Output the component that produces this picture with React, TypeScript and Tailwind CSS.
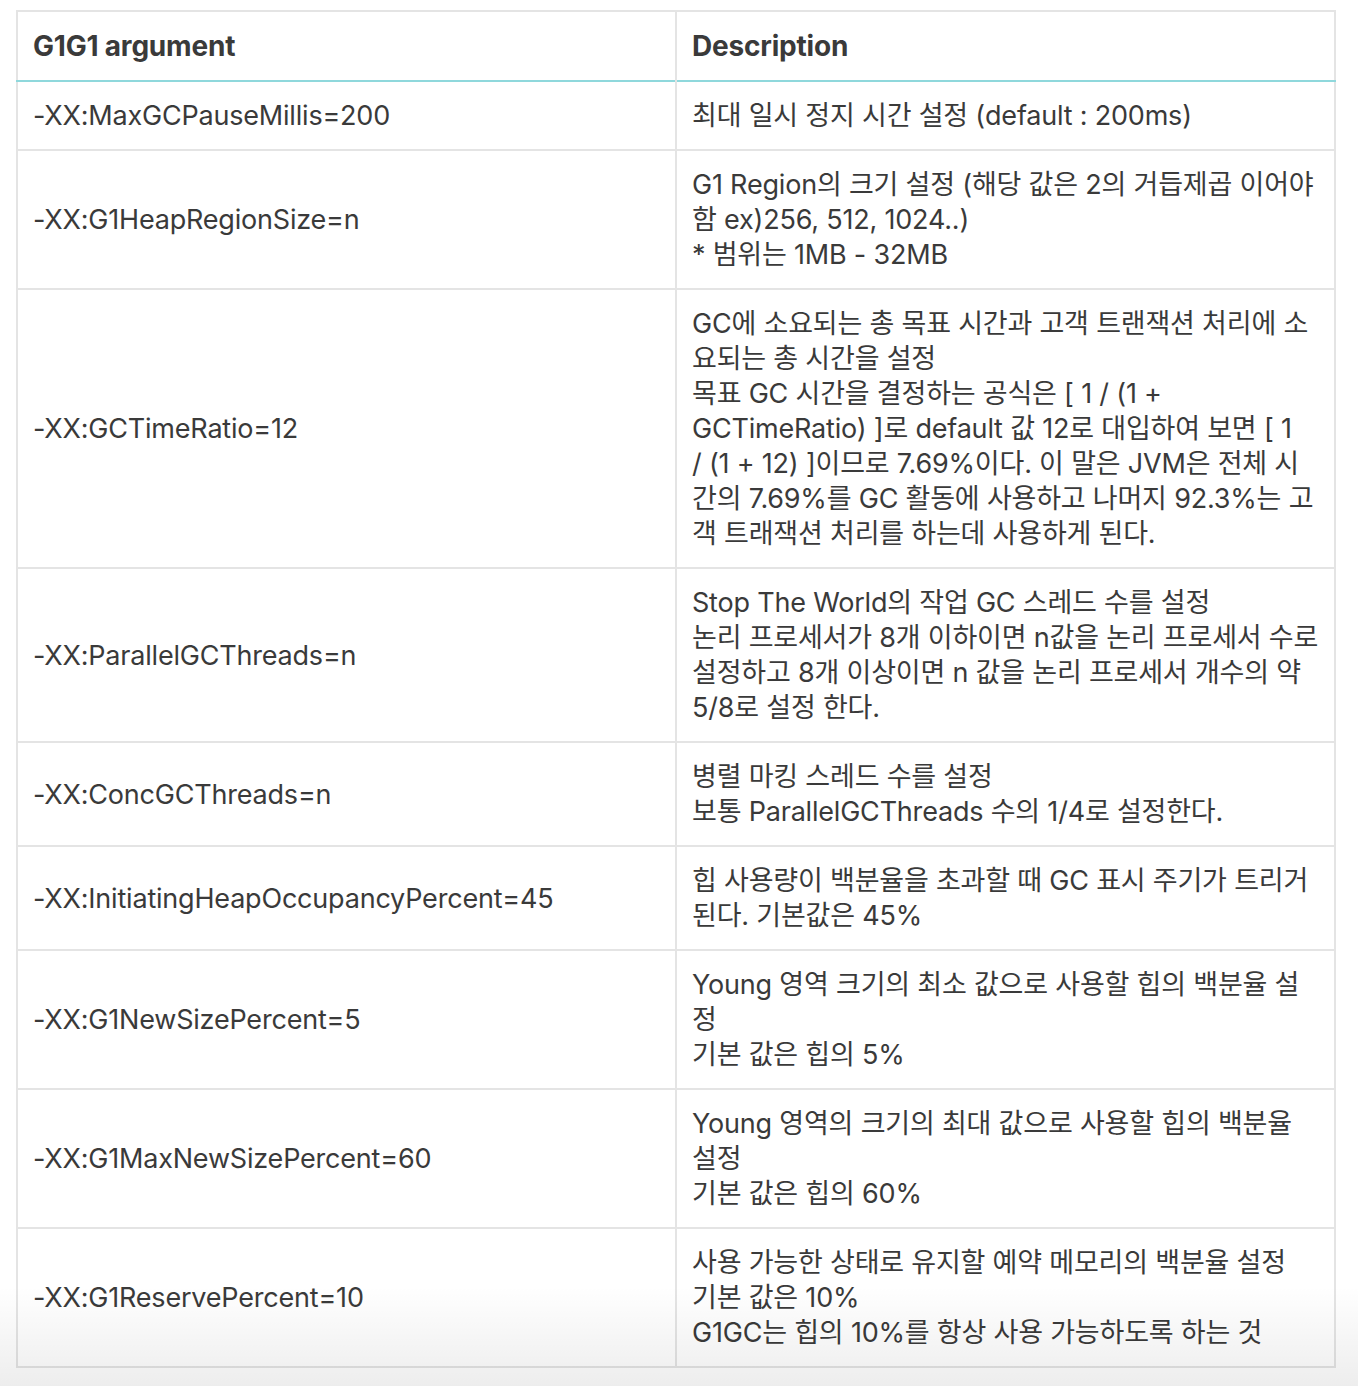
const rows: { arg: string; desc: string[] }[] = [
  { arg: '-XX:MaxGCPauseMillis=200', desc: ['최대 일시 정지 시간 설정 (default : 200ms)'] },
  {
    arg: '-XX:G1HeapRegionSize=n',
    desc: ['G1 Region의 크기 설정 (해당 값은 2의 거듭제곱 이어야', '함 ex)256, 512, 1024..)', '* 범위는 1MB - 32MB'],
  },
  {
    arg: '-XX:GCTimeRatio=12',
    desc: [
      'GC에 소요되는 총 목표 시간과 고객 트랜잭션 처리에 소',
      '요되는 총 시간을 설정',
      '목표 GC 시간을 결정하는 공식은 [ 1 / (1 +',
      'GCTimeRatio) ]로 default 값 12로 대입하여 보면 [ 1',
      '/ (1 + 12) ]이므로 7.69%이다. 이 말은 JVM은 전체 시',
      '간의 7.69%를 GC 활동에 사용하고 나머지 92.3%는 고',
      '객 트래잭션 처리를 하는데 사용하게 된다.',
    ],
  },
  {
    arg: '-XX:ParallelGCThreads=n',
    desc: [
      'Stop The World의 작업 GC 스레드 수를 설정',
      '논리 프로세서가 8개 이하이면 n값을 논리 프로세서 수로',
      '설정하고 8개 이상이면 n 값을 논리 프로세서 개수의 약',
      '5/8로 설정 한다.',
    ],
  },
  { arg: '-XX:ConcGCThreads=n', desc: ['병렬 마킹 스레드 수를 설정', '보통 ParallelGCThreads 수의 1/4로 설정한다.'] },
  {
    arg: '-XX:InitiatingHeapOccupancyPercent=45',
    desc: ['힙 사용량이 백분율을 초과할 때 GC 표시 주기가 트리거', '된다. 기본값은 45%'],
  },
  {
    arg: '-XX:G1NewSizePercent=5',
    desc: ['Young 영역 크기의 최소 값으로 사용할 힙의 백분율 설', '정', '기본 값은 힙의 5%'],
  },
  {
    arg: '-XX:G1MaxNewSizePercent=60',
    desc: ['Young 영역의 크기의 최대 값으로 사용할 힙의 백분율', '설정', '기본 값은 힙의 60%'],
  },
  {
    arg: '-XX:G1ReservePercent=10',
    desc: ['사용 가능한 상태로 유지할 예약 메모리의 백분율 설정', '기본 값은 10%', 'G1GC는 힙의 10%를 항상 사용 가능하도록 하는 것'],
  },
];

export default function App() {
  return (
    <div
      className="relative min-h-[1386px] w-[1358px] bg-white pt-[10px] pl-[16px] text-[#3a3a3a]"
      style={{ fontFamily: 'Inter, "Noto Sans CJK KR", sans-serif' }}
    >
      <table className="w-[1320px] table-fixed border-collapse border-2 border-[#e4e4e4] text-[27px] leading-[35px] tracking-[-0.2px]">
        <colgroup>
          <col className="w-[659px]" />
          <col />
        </colgroup>
        <thead>
          <tr className="h-[70px] border-b-2 border-[#8fd8dc] text-[28px]">
            <th className="border-r-2 border-[#e4e4e4] px-[15px] text-left font-bold">G1G1 argument</th>
            <th className="px-[15px] text-left font-bold">Description</th>
          </tr>
        </thead>
        <tbody>
          {rows.map((r) => (
            <tr key={r.arg} className="border-t-2 border-[#e4e4e4] first:border-t-0">
              <td className="border-r-2 border-[#e4e4e4] px-[15px] py-[16px] align-middle whitespace-nowrap">{r.arg}</td>
              <td className="px-[15px] py-[16px] align-middle">
                {r.desc.map((l, i) => (
                  <div key={i} className="whitespace-nowrap">
                    {l}
                  </div>
                ))}
              </td>
            </tr>
          ))}
        </tbody>
      </table>
      {/* soft grey fade at the bottom edge */}
      <div className="pointer-events-none absolute bottom-0 left-0 h-[100px] w-full bg-gradient-to-b from-transparent to-black/[0.07]" />
    </div>
  );
}
